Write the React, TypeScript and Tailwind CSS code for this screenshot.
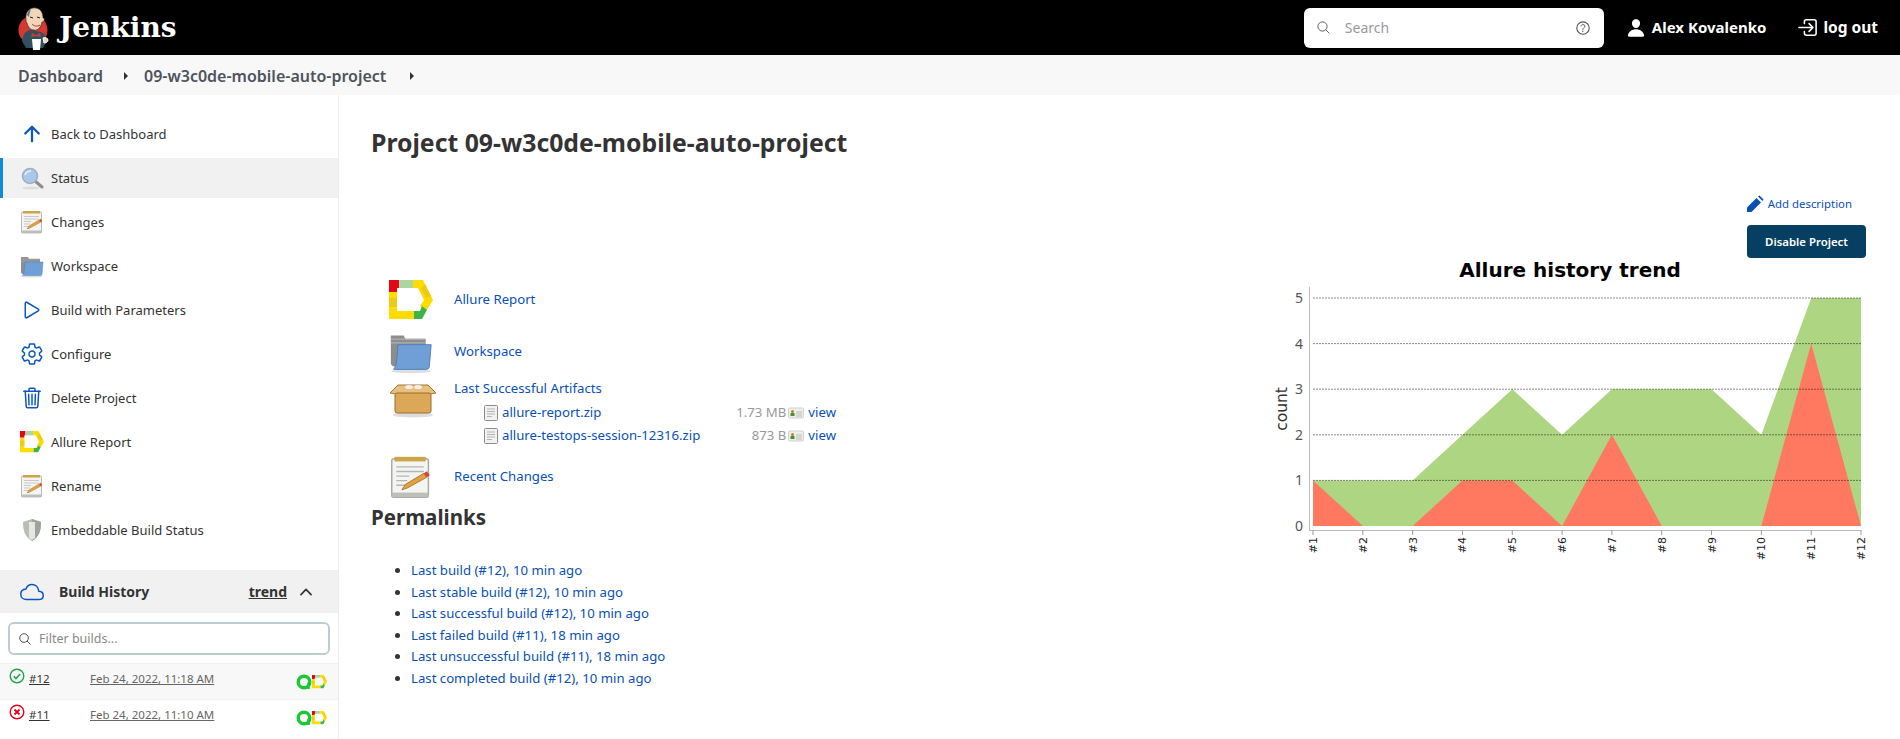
import { IoArrowUpOutline, IoPlayOutline, IoSettingsOutline, IoTrashOutline, IoCloudOutline, IoChevronUp, IoSearchOutline, IoHelpCircleOutline, IoPerson, IoLogInOutline } from 'react-icons/io5'
import type { ReactNode } from 'react'

const BLUE = '#0b57c0'

function JenkinsLogo() {
  return (
    <svg viewBox="0 0 32 44" className="h-[44px] w-[32px]">
      <circle cx="15" cy="24" r="14.500" fill="#d33833" />
      <path d="M4 35c1-7 4-10 8-11l11 2c4 2 5 5 6 9l-4 7H8z" fill="#335061" />
      <path d="M8 13C7 6 12 1 18 2c5 1 7 5 7 10 1 0 2 1 1 3-1 1-2 1-2 1-1 5-4 9-8 8-4 0-6-3-7-7-1-1-1-2-1-4z" fill="#f0d6b7" stroke="#231f20" strokeWidth="0.6" />
      <path d="M9 9c1-3 2-5 4-6-1 3-2 5-2 8z" fill="#49728b" />
      <path d="M14 18c2 2 5 3 8 1" stroke="#a33" fill="none" strokeWidth="1" />
      <path d="M12 11l3 1M19 11l3 1" stroke="#231f20" strokeWidth="1" />
      <path d="M14 27l4 2 4-2 1 4-5-1-5 1z" fill="#d33833" />
      <path d="M14 33h9l-1 11h-7z" fill="#fff" />
      <path d="M25 32c2-1 5 0 5 2s-2 3-4 3z" fill="#f0d6b7" stroke="#fff" />
    </svg>
  )
}

function MagnifierIcon() {
  return (
    <svg viewBox="0 0 24 24" className="h-6 w-6">
      <ellipse cx="11" cy="22" rx="9" ry="1.500" fill="#ddd" />
      <path d="M15 15l7 6" stroke="#8a8f8f" strokeWidth="3" strokeLinecap="round" />
      <circle cx="10" cy="10" r="7.500" fill="#a9c8ea" stroke="#9fb1c2" strokeWidth="1.600" />
      <path d="M5 9c1-3 3-4 6-4" stroke="#e8f1fa" strokeWidth="1.600" fill="none" />
    </svg>
  )
}

function NotepadIcon({ size = 24 }: { size?: number }) {
  return (
    <svg viewBox="0 0 24 24" width={size} height={size}>
      <rect x="1.500" y="2" width="20" height="21" rx="1.200" fill="#f4f4f2" stroke="#a8a8a4" strokeWidth="0.800" />
      <rect x="1.500" y="20.500" width="20" height="2.500" fill="#bdbdb9" />
      <rect x="3" y="1" width="17" height="2.500" fill="#c9a64a" />
      <path d="M4 6.500h15M4 9h15M4 11.500h7M4 14h6M4 16.500h5" stroke="#b5b5b5" strokeWidth="0.700" />
      <path d="M7 19l2-3 10-6 1.500 2.200-10.500 5.800z" fill="#e5a23b" stroke="#8a6420" strokeWidth="0.400" />
      <path d="M19 10l1.500 2.200 1.700-1-1.500-2.400z" fill="#d8433a" />
    </svg>
  )
}

function FolderIcon({ size = 24 }: { size?: number }) {
  return (
    <svg viewBox="0 0 24 24" width={size} height={size}>
      <ellipse cx="12" cy="22.500" rx="11" ry="1" fill="#ddd" />
      <path d="M1 3h7l1 2h11v15H3c-1 0-2-1-2-2z" fill="#8d8d8d" />
      <path d="M1 5h19M1 7h19" stroke="#b0b0b0" strokeWidth="0.600" />
      <path d="M5 8h18l-1 12c0 1-1 1.500-1.500 1.500H2.500C3 21 4 19 4 18z" fill="#6f9fd6" stroke="#4f7eb5" strokeWidth="0.500" />
    </svg>
  )
}

function AllureIcon({ size = 24 }: { size?: number }) {
  return (
    <svg viewBox="0 0 44 40" width={size} height={(size * 40) / 44}>
      <polygon points="0,12 8,12 8,31 25,31 25,39 0,39" fill="#ffdc00" />
      <polygon points="0,18 8,18 8,27 0,27" fill="#eacb17" />
      <polygon points="0,0 10,0 10,8 8,8 8,12 0,12" fill="#e30613" />
      <polygon points="10,0 24,0 24,8 10,8" fill="#a9d6a2" />
      <polygon points="24,0 34,0 44,20 38,30 31,26 35,20 29,8 24,8" fill="#ffdc00" />
      <polygon points="36,4 42,16 37,18 32,8" fill="#eacb17" />
      <polygon points="38,30 33,39 25,39 25,31 31,31 33,26" fill="#3db34a" />
    </svg>
  )
}

function ShieldIcon() {
  return (
    <svg viewBox="0 0 24 24" className="h-6 w-6">
      <path d="M12 1l9 3c0 9-2 15-9 19C5 19 3 13 3 4z" fill="#b9bdb5" />
      <path d="M12 1l9 3c0 9-2 15-9 19z" fill="#9ea29a" />
      <path d="M9 4h6v16l-3 2-3-2z" fill="#e4e6e1" />
    </svg>
  )
}

function BoxIcon() {
  return (
    <svg viewBox="0 0 48 38" className="h-[38px] w-[48px]">
      <ellipse cx="24" cy="35" rx="20" ry="2.500" fill="#ddd" />
      <path d="M1 13l8-8h30l8 8-6 1H7z" fill="#e8bf7c" stroke="#a8762d" />
      <ellipse cx="20" cy="7" rx="4" ry="2" fill="#eee" />
      <ellipse cx="29" cy="7" rx="4" ry="2" fill="#eee" />
      <rect x="6" y="13" width="36" height="20" rx="2" fill="#dba858" stroke="#9c6d28" />
    </svg>
  )
}

function ZipIcon() {
  return (
    <svg viewBox="0 0 14 16" className="h-4 w-[14px] shrink-0">
      <rect x="0.500" y="0.500" width="13" height="15" rx="1" fill="#f2f2f2" stroke="#8c8c8c" />
      <path d="M3 4h8M3 6.500h8M3 9h8M3 11.500h5" stroke="#b3b3b3" />
    </svg>
  )
}

function FingerprintIcon() {
  return (
    <svg viewBox="0 0 16 12" className="h-3 w-4 shrink-0">
      <rect x="0.500" y="1" width="15" height="10" rx="1" fill="#eeeeea" stroke="#d2d2ce" />
      <circle cx="4.500" cy="4.500" r="1.500" fill="#b4832c" />
      <rect x="2.500" y="6" width="4" height="3" fill="#4f8a3a" />
      <path d="M8 5h6M8 7h6M8 9h6" stroke="#bdbdb9" />
    </svg>
  )
}

function BadgeAllure() {
  return (
    <div className="flex items-center">
      <svg viewBox="0 0 16 16" className="h-4 w-4">
        <circle cx="8" cy="8" r="5.800" fill="none" stroke="#18c932" strokeWidth="3.400" />
        <path d="M12.500 8.500V15" stroke="#18c932" strokeWidth="2.500" />
      </svg>
      <AllureIcon size={15} />
    </div>
  )
}

function SideLink({ icon, label, active }: { icon: ReactNode; label: string; active?: boolean }) {
  return (
    <div className={`flex h-10 items-center text-[13px] text-[#333] ${active ? 'border-l-[3px] border-[#0b8ddb] bg-[#f1f1f1] pl-[17px]' : 'pl-5'}`}>
      <span className="flex w-[31px] shrink-0 items-center">{icon}</span>
      <span className="pt-[1px]">{label}</span>
    </div>
  )
}

function Chart() {
  const x = (i: number) => 43 + (i * 548) / 11
  const y = (v: number) => 40 + (5 - v) * 45.600
  const total = [1, 1, 1, 2, 3, 2, 3, 3, 3, 2, 5, 5]
  const failed = [1, 0, 0, 1, 1, 0, 2, 0, 0, 0, 4, 0]
  const area = (vals: number[]) =>
    `M${x(0)} ${y(0)} ` + vals.map((v, i) => `L${x(i)} ${y(v)}`).join(' ') + ` L${x(11)} ${y(0)} Z`
  return (
    <svg viewBox="0 0 630 320" width="630" height="320" className="block">
      <text x="300" y="19" textAnchor="middle" fontFamily="DejaVu Sans" fontWeight="bold" fontSize="20" fill="#000">Allure history trend</text>
      <path d={area(total)} fill="#aed581" />
      <path d={area(failed)} fill="#ff7961" />
      {[0, 1, 2, 3, 4, 5].map((v) => (
        <g key={v}>
          {v > 0 && <line x1={x(0)} x2={x(11)} y1={y(v)} y2={y(v)} stroke="#000" strokeOpacity="0.45" strokeDasharray="2 1" />}
          <text x="33" y={y(v) + 5} textAnchor="end" fontFamily="Noto Sans" fontSize="14" fill="#555">{v}</text>
        </g>
      ))}
      <line x1="39.500" x2="39.500" y1="29" y2="272" stroke="#bbb" />
      <line x1="39" x2={x(11)} y1="272.500" y2="272.500" stroke="#bbb" />
      {total.map((_, i) => (
        <g key={i}>
          <line x1={x(i)} x2={x(i)} y1="272" y2="277" stroke="#999" />
          <text transform={`translate(${x(i) + 4} 279) rotate(-90)`} textAnchor="end" fontFamily="DejaVu Sans" fontSize="11" fill="#222">{`#${i + 1}`}</text>
        </g>
      ))}
      <text transform="translate(17 151) rotate(-90)" textAnchor="middle" fontFamily="DejaVu Sans" fontSize="15.500" fill="#333">count</text>
    </svg>
  )
}

const permalinks = [
  'Last build (#12), 10 min ago',
  'Last stable build (#12), 10 min ago',
  'Last successful build (#12), 10 min ago',
  'Last failed build (#11), 18 min ago',
  'Last unsuccessful build (#11), 18 min ago',
  'Last completed build (#12), 10 min ago',
]

function Artifact({ name, size }: { name: string; size: string }) {
  return (
    <div className="ml-[30px] flex h-[23px] items-center">
      <ZipIcon />
      <span className="ml-[4px]">{name}</span>
      <span className="ml-auto text-[#999]">{size}</span>
      <span className="ml-[2px]"><FingerprintIcon /></span>
      <span className="ml-[4px]">view</span>
    </div>
  )
}

function BuildRow({ ok, num, date }: { ok?: boolean; num: string; date: string }) {
  return (
    <div className={`flex h-9 items-start border-t border-[#f1f1f1] pl-[9px] pr-[11px] pt-[4px] text-[11.500px] ${ok ? 'bg-[#f8f8f8]' : ''}`}>
      <svg viewBox="0 0 16 16" className="h-4 w-4 shrink-0">
        <circle cx="8" cy="8" r="6.800" fill="none" stroke={ok ? '#1ea64b' : '#e6001f'} strokeWidth="1.400" />
        {ok ? (
          <path d="M4.800 8.300l2.200 2.200 4.200-4.500" fill="none" stroke="#1ea64b" strokeWidth="1.600" />
        ) : (
          <path d="M5.500 5.500l5 5m0-5l-5 5" fill="none" stroke="#e6001f" strokeWidth="1.800" />
        )}
      </svg>
      <span className="ml-[4px] mt-[2px] w-[61px] text-[#333] underline">{num}</span>
      <span className="mt-[2px] flex-1 text-[#666] underline">{date}</span>
      <span className="mt-[6px]"><BadgeAllure /></span>
    </div>
  )
}

export default function App() {
  return (
    <div className="h-[739px] overflow-hidden bg-white font-['Noto_Sans',sans-serif] text-[#333]">
      <header className="flex h-[55px] items-center bg-black pl-[18px] pr-[22px] text-white">
        <JenkinsLogo />
        <span className="ml-[9px] font-['DejaVu_Serif',serif] text-[28px] font-bold">Jenkins</span>
        <div className="ml-auto flex h-10 w-[300px] items-center rounded-md bg-white px-3 text-[#999]">
          <IoSearchOutline size={15} className="text-[#555]" />
          <span className="ml-[14px] flex-1 text-sm">Search</span>
          <IoHelpCircleOutline size={18} className="text-[#555]" />
        </div>
        <IoPerson size={20} className="ml-[22px]" />
        <span className="ml-[6px] text-[15px] font-bold">Alex Kovalenko</span>
        <IoLogInOutline size={25} className="ml-[29px]" />
        <span className="ml-[3px] text-[15.500px] font-bold">log out</span>
      </header>

      <nav className="flex h-10 items-center bg-[#f8f8f8] pl-[18px] pt-[1px] text-[16px] font-semibold text-[#4d545d]">
        <span>Dashboard</span>
        <span className="ml-[21px] h-0 w-0 border-y-4 border-l-4 border-y-transparent border-l-[#333]" />
        <span className="ml-[16px]">09-w3c0de-mobile-auto-project</span>
        <span className="ml-6 h-0 w-0 border-y-4 border-l-4 border-y-transparent border-l-[#333]" />
      </nav>

      <div className="flex">
        <aside className="h-[644px] w-[339px] shrink-0 border-r border-[#eee] pt-[19px]">
          <div className="flex flex-col gap-1">
            <SideLink icon={<IoArrowUpOutline size={24} color={BLUE} />} label="Back to Dashboard" />
            <SideLink active icon={<MagnifierIcon />} label="Status" />
            <SideLink icon={<NotepadIcon />} label="Changes" />
            <SideLink icon={<FolderIcon />} label="Workspace" />
            <SideLink icon={<IoPlayOutline size={24} color={BLUE} />} label="Build with Parameters" />
            <SideLink icon={<IoSettingsOutline size={24} color={BLUE} />} label="Configure" />
            <SideLink icon={<IoTrashOutline size={24} color={BLUE} />} label="Delete Project" />
            <SideLink icon={<AllureIcon />} label="Allure Report" />
            <SideLink icon={<NotepadIcon />} label="Rename" />
            <SideLink icon={<ShieldIcon />} label="Embeddable Build Status" />
          </div>

          <div className="mt-[20px] flex h-[43px] items-center bg-[#f1f1f1] pl-5 pr-[23px] text-sm font-bold">
            <IoCloudOutline size={24} color={BLUE} />
            <span className="ml-[15px] flex-1">Build History</span>
            <span className="underline">trend</span>
            <IoChevronUp size={18} className="ml-[10px]" />
          </div>
          <div className="mx-[8px] mt-[9px] flex h-[33px] items-center rounded-md border-2 border-[#bccdd2] pl-[8px] pt-[1px] text-[12.500px] text-[#888]">
            <IoSearchOutline size={14} className="text-[#333]" />
            <span className="ml-[7px]">Filter builds...</span>
          </div>
          <div className="mt-[8px]">
            <BuildRow ok num="#12" date="Feb 24, 2022, 11:18 AM" />
            <BuildRow num="#11" date="Feb 24, 2022, 11:10 AM" />
          </div>
        </aside>

        <main className="min-w-0 flex-1 pl-[32px]">
          <h1 className="mt-[30px] text-[24.800px] font-bold leading-[34px] text-[#333]">Project 09-w3c0de-mobile-auto-project</h1>
          <div className="flex flex-col items-end pr-[34px]">
            <div className="mr-[14px] mt-[36px] flex items-center text-[11.400px] text-[#0a50b4]">
              <svg viewBox="0 0 18 18" className="mr-[4px] h-[18px] w-[18px]">
                <path d="M1 17v-4.500L10.500 3 15 7.500 5.500 17z" fill="#0a50b4" />
                <path d="M12 1.500l1.500-1L17.500 4.500l-1 1.500z" fill="#0a50b4" />
              </svg>
              Add description
            </div>
            <button className="mt-[12px] h-[33px] w-[119px] rounded bg-[#063f61] text-[11.400px] font-semibold text-white">Disable Project</button>
          </div>
          <div className="flex justify-between">
            <div className="pt-[16px] text-[13.200px] text-[#0a50b4]">
              <div className="flex h-[52px] items-center">
                <span className="ml-[18px] w-[65px]"><AllureIcon size={44} /></span>
                <span>Allure Report</span>
              </div>
              <div className="flex h-[52px] items-center">
                <span className="ml-[18px] w-[65px]"><FolderIcon size={44} /></span>
                <span>Workspace</span>
              </div>
              <div className="flex items-start">
                <span className="ml-[18px] mt-[2px] w-[65px]"><BoxIcon /></span>
                <div className="w-[382px]">
                  <div className="mb-[3px] leading-[20px]">Last Successful Artifacts</div>
                  <Artifact name="allure-report.zip" size="1.73 MB" />
                  <Artifact name="allure-testops-session-12316.zip" size="873 B" />
                </div>
              </div>
              <div className="mt-[6px] flex h-[48px] items-center">
                <span className="ml-[18px] w-[65px]"><NotepadIcon size={44} /></span>
                <span>Recent Changes</span>
              </div>
              <h2 className="mt-[2px] text-[20.500px] font-bold leading-[29px] text-[#333]">Permalinks</h2>
              <ul className="ml-[40px] mt-[28px] list-disc leading-[21.500px] marker:text-[#333]">
                {permalinks.map((p) => (
                  <li key={p}>{p}</li>
                ))}
              </ul>
            </div>
            <Chart />
          </div>
        </main>
      </div>
    </div>
  )
}
